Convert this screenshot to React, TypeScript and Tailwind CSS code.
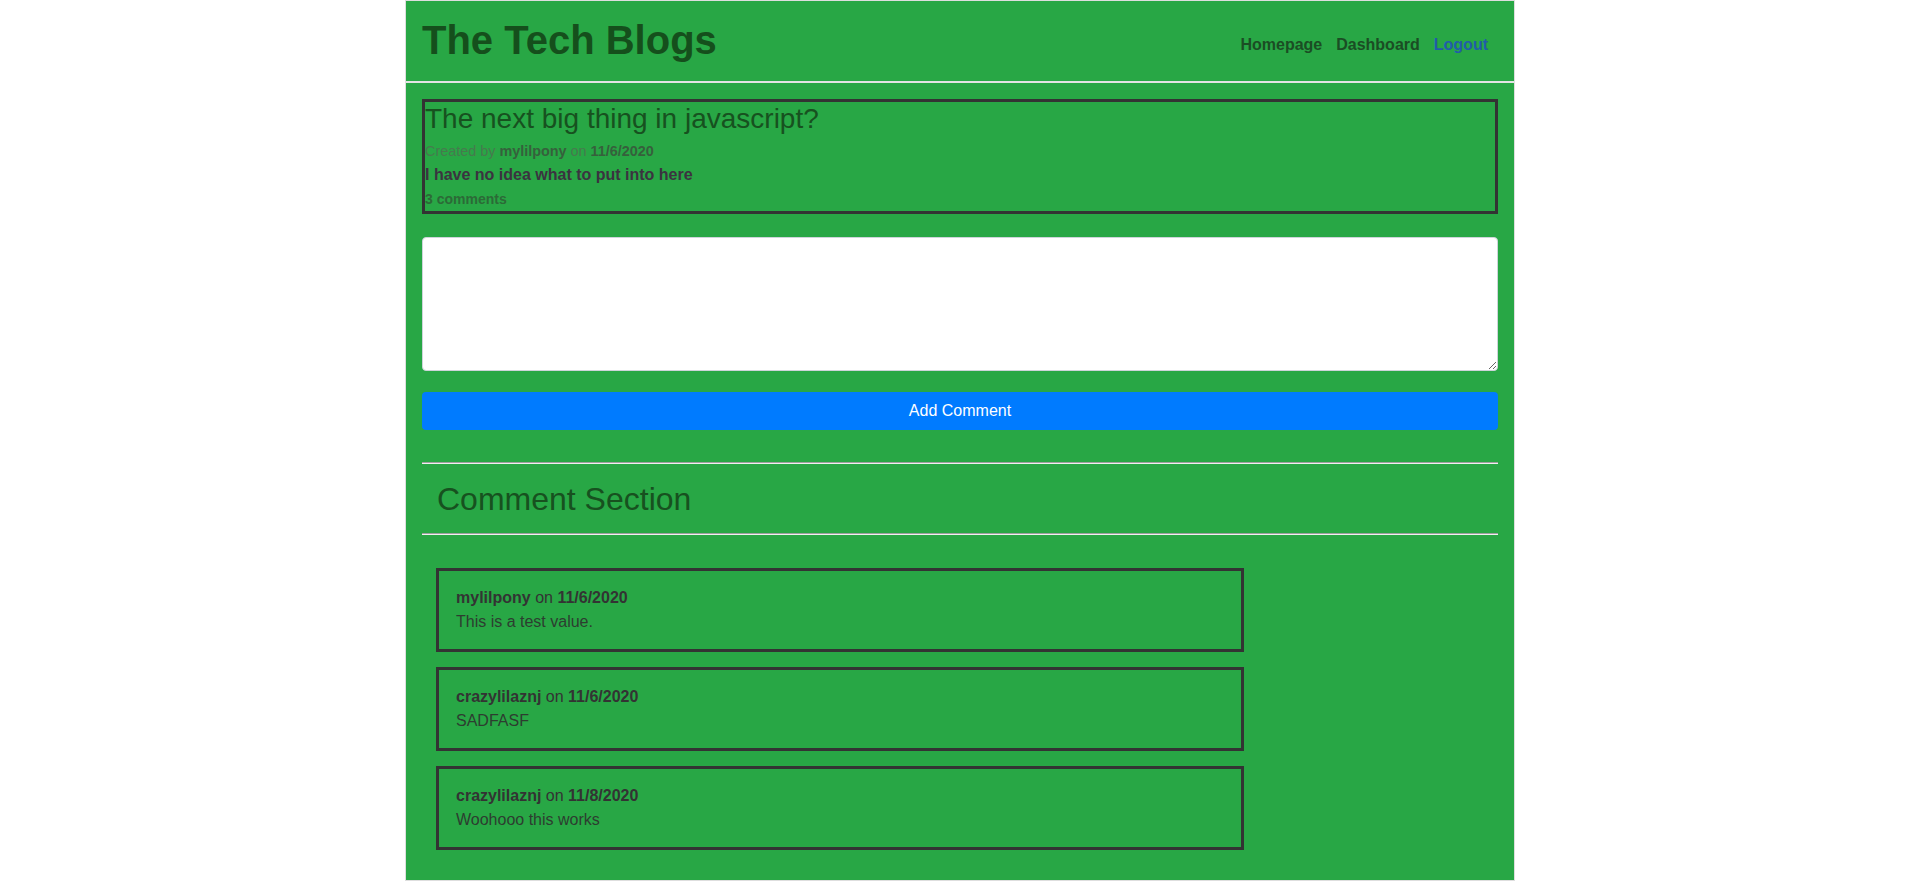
import { useState } from "react";

type Comment = {
    user: string;
    date: string;
    text: string;
};

const comments: Comment[] = [
    { user: "mylilpony", date: "11/6/2020", text: "This is a test value." },
    { user: "crazylilaznj", date: "11/6/2020", text: "SADFASF" },
    { user: "crazylilaznj", date: "11/8/2020", text: "Woohooo this works" },
];

export default function App() {
    const [comment, setComment] = useState("");

    return (
        <div className="min-h-screen bg-white font-['Liberation_Sans',Arial,sans-serif] text-base">
            <div className="mx-auto w-[1110px] border border-[#dedede] bg-[#28a745]">
                <header className="flex items-center justify-between border-b-2 border-[#e4e4e4] pl-4 pr-[26px] pt-[15px] pb-[17px]">
                    <h1 className="text-[40px] leading-[48px] font-bold text-[#154f1c]">The Tech Blogs</h1>
                    <nav className="flex gap-[14px] pt-[10px] font-bold leading-6">
                        <a href="#" className="text-[#1b4d24]">
                            Homepage
                        </a>
                        <a href="#" className="text-[#1b4d24]">
                            Dashboard
                        </a>
                        <a href="#" className="text-[#215caa]">
                            Logout
                        </a>
                    </nav>
                </header>

                <main className="px-4 pt-4 pb-[30px]">
                    <div className="border-[3px] border-[#333] pb-[1px]">
                        <h3 className="text-[28px] leading-[1.2] text-[#17511f]">The next big thing in javascript?</h3>
                        <div className="mt-[5px] text-[14.4px] leading-[21px] text-[#467a4e]">
                            Created by <span className="font-bold text-[#36603c]">mylilpony</span> on{" "}
                            <span className="font-bold text-[#36603c]">11/6/2020</span>
                        </div>
                        <p className="mt-[1px] font-bold leading-6 text-[#3b3340]">I have no idea what to put into here</p>
                        <div className="mt-[2px] text-sm leading-[21px] font-bold text-[#2c6a37]">3 comments</div>
                    </div>

                    <textarea
                        className="mt-[23px] block h-[134px] w-full rounded-[4px] border border-[#ced4da] bg-white px-3 py-2 text-[#495057] outline-none"
                        value={comment}
                        onChange={(e) => setComment(e.currentTarget.value)}
                    />
                    <button
                        className="mt-[21px] block h-[38px] w-full cursor-pointer rounded-[4px] bg-[#007bff] text-white"
                        onClick={() => setComment("")}
                    >
                        Add Comment
                    </button>

                    <div className="mt-8 border-t border-b border-t-[#a0a0a0] border-b-[#f0f0f0]" />
                    <h2 className="mt-[16px] pl-[15px] text-[32px] leading-[1.2] text-[#17511f]">Comment Section</h2>
                    <div className="mt-[15px] border-t border-b border-t-[#a0a0a0] border-b-[#f0f0f0]" />

                    <div className="mt-[33px] flex flex-col gap-[15px] px-[14px]">
                        {comments.map((c, i) => (
                            <div key={i} className="w-[808px] border-[3px] border-[#333] px-[17px] py-[15px] leading-6">
                                <div className="text-[#333]">
                                    <span className="font-bold">{c.user}</span> on <span className="font-bold">{c.date}</span>
                                </div>
                                <div className="text-[#2d3d30]">{c.text}</div>
                            </div>
                        ))}
                    </div>
                </main>
            </div>
        </div>
    );
}
